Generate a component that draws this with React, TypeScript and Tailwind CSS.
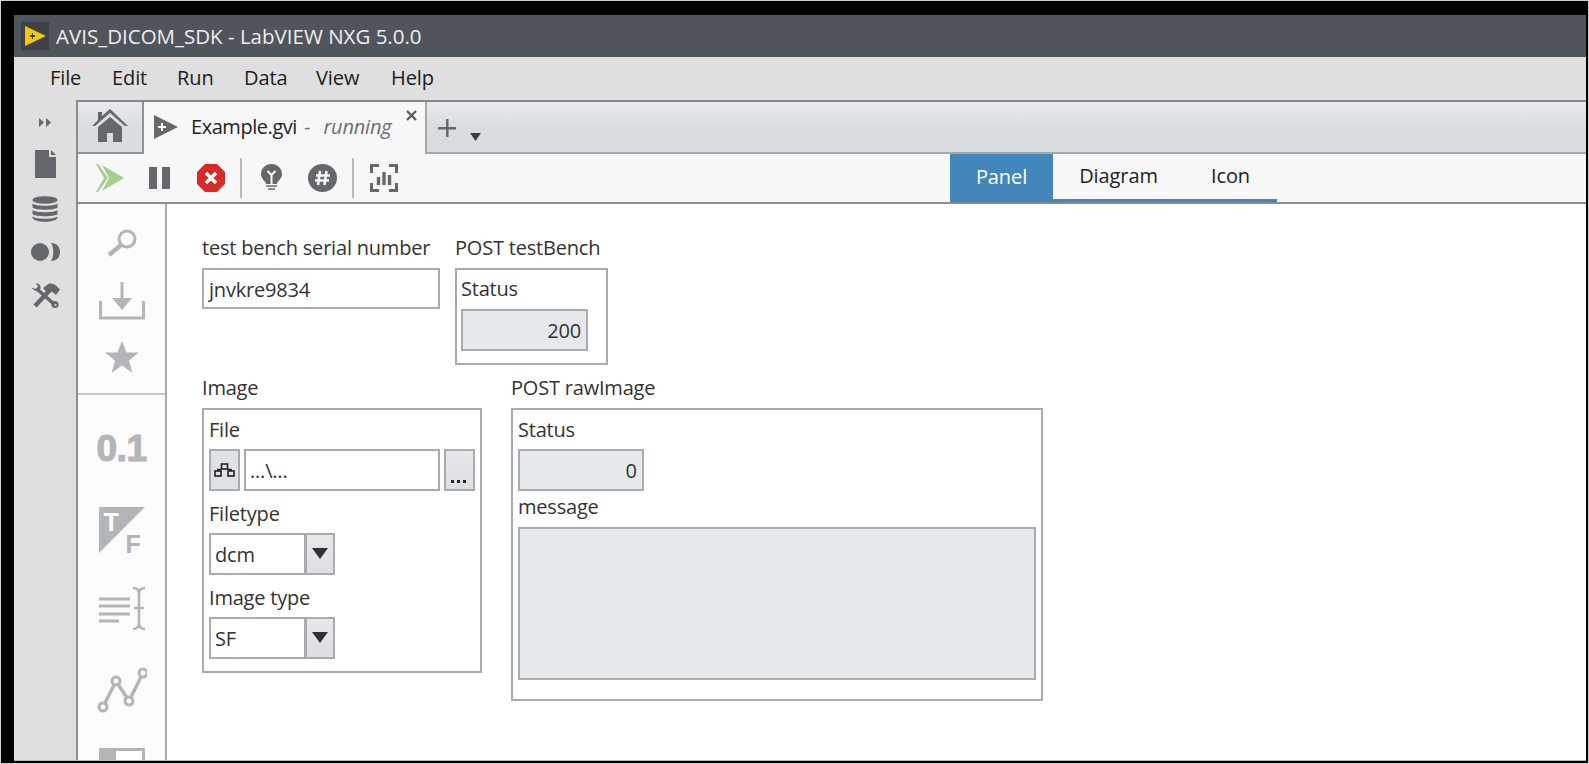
import React from "react";

const F = { fontFamily: '"Open Sans","Noto Sans",sans-serif' };

function Label({ children, className = "" }: { children: React.ReactNode; className?: string }) {
  return <div className={`text-[20px] leading-[26px] text-[#333] tracking-[-0.2px] ${className}`}>{children}</div>;
}

function Combo({ value }: { value: string }) {
  return (
    <div className="flex h-[42px] w-[126px] border-2 border-[#a9abae] bg-white">
      <div className="flex-1 pl-[4px] text-[20px] leading-[40px] tracking-[-0.2px] text-[#333]">{value}</div>
      <div className="flex w-[29px] items-center justify-center border-l-[3px] border-[#a9abae] bg-gradient-to-b from-[#e6e8ea] to-[#dcdfe2]">
        <svg width="16" height="12" viewBox="0 0 16 12"><path d="M0 0H16L8 11Z" fill="#2f3235" /></svg>
      </div>
    </div>
  );
}

function PaletteIcons() {
  const c = "#b3b6b8";
  return (
    <div className="flex h-full w-[89px] shrink-0 flex-col overflow-hidden border-r-2 border-[#a9abae] bg-[#fbfbfb]">
      <div className="flex flex-col items-center border-b-2 border-[#c5c7c9] pb-[20px] pt-[25px]">
        <svg width="32" height="28" viewBox="0 0 32 28" fill="none" stroke={c}>
          <circle cx="21" cy="10" r="8" strokeWidth="3" />
          <path d="M15 16L3 26" strokeWidth="4.5" />
        </svg>
        <svg className="mt-[25px]" width="46" height="38" viewBox="0 0 46 38" fill="none">
          <path d="M23 0V24" stroke={c} strokeWidth="3" />
          <path d="M13 16H33L23 28Z" fill={c} />
          <path d="M1.5 19V36H44.5V19" stroke={c} strokeWidth="3" />
        </svg>
        <svg className="mt-[21px]" width="34" height="32" viewBox="0 0 34 32"><path d="M17 0L21.5 11.5H34L24 19.5L27.5 32L17 24.5L6.5 32L10 19.5L0 11.5H12.5Z" fill={c} /></svg>
      </div>
      <div className="flex flex-col items-center pt-[36px]">
        <div className="h-[36px] text-[37px] leading-[36px] font-bold tracking-[-0.5px] text-[#b3b6b8] [-webkit-text-stroke:1.2px_#b3b6b8]" style={{ fontFamily: '"Liberation Sans",sans-serif' }}>0.1</div>
        <div className="relative mt-[40px] h-[46px] w-[46px]">
          <svg className="absolute inset-0" width="46" height="46" viewBox="0 0 46 46"><path d="M0 0H46L0 46Z" fill={c} /></svg>
          <span className="absolute left-[5px] top-[3px] text-[25px] leading-[25px] font-bold text-white" style={{ fontFamily: '"Liberation Sans",sans-serif' }}>T</span>
          <span className="absolute left-[27px] top-[25px] text-[25px] leading-[25px] font-bold text-[#b3b6b8]" style={{ fontFamily: '"Liberation Sans",sans-serif' }}>F</span>
        </div>
        <svg className="mt-[33px]" width="46" height="45" viewBox="0 0 46 45" fill="none" stroke={c} strokeWidth="3">
          <path d="M0 13H31M0 20H31M0 28H31M0 35H20" />
          <path d="M34 2C39 2 40 5 40 8V37C40 40 39 43 34 43M46 2C41 2 40 5 40 8M40 37C40 40 41 43 46 43M35 22H45" strokeWidth="2.6" />
        </svg>
        <svg className="mt-[36px]" width="50" height="46" viewBox="0 0 50 46" fill="none" stroke={c} strokeWidth="3.5">
          <path d="M6 40L19 14L32 34L46 6" />
          <circle cx="6" cy="40" r="4" fill="#fbfbfb" strokeWidth="3" />
          <circle cx="19" cy="14" r="4" fill="#fbfbfb" strokeWidth="3" />
          <circle cx="32" cy="34" r="4" fill="#fbfbfb" strokeWidth="3" />
          <circle cx="46" cy="6" r="4" fill="#fbfbfb" strokeWidth="3" />
        </svg>
        <div className="mt-[35px] flex h-[30px] w-[46px] shrink-0 border-[3px] border-[#b3b6b8] bg-white">
          <div className="h-[30px] w-[14px] bg-[#b3b6b8]" />
        </div>
      </div>
    </div>
  );
}

export default function App() {
  const ic = "#64686c";
  return (
    <div className="flex h-screen w-screen flex-col overflow-hidden border border-[#cfcfcf] bg-black pb-[2px] pl-[13px] pr-[2px] pt-[14px]" style={F}>
      {/* Title bar */}
      <div className="flex h-[42px] shrink-0 items-center gap-[7px] bg-[#50555c] pl-[7px]">
        <div className="flex h-[28px] w-[28px] items-center justify-center bg-[#3e4247]">
          <svg width="22" height="20" viewBox="0 0 22 20">
            <path d="M1 0L22 10L1 20Z" fill="#f5c800" />
            <path d="M6 9H8V7H9V9H11V11H9V13H8V11H6Z" fill="#3e4247" />
          </svg>
        </div>
        <div className="whitespace-nowrap text-[20.5px] leading-[26px] text-[#eceef0]">AVIS_DICOM_SDK - LabVIEW NXG 5.0.0</div>
      </div>
      {/* Menu */}
      <div className="flex h-[43px] shrink-0 items-center bg-[#dfdfdf] pb-[2px] pl-[36px] text-[20px] tracking-[-0.1px] text-[#1c1c1c]">
        <span className="w-[62px]">File</span>
        <span className="w-[65px]">Edit</span>
        <span className="w-[67px]">Run</span>
        <span className="w-[72px]">Data</span>
        <span className="w-[75px]">View</span>
        <span>Help</span>
      </div>
      <div className="flex min-h-0 flex-1 border-b border-[#b5b5b5]">
        {/* Rail */}
        <div className="flex w-[64px] shrink-0 flex-col items-center border-r-2 border-[#8a8d90] bg-[#dfdfdf] pt-[18px]">
          <svg width="12" height="9" viewBox="0 0 12 9" fill={ic}><path d="M0 0L5 4.5L0 9ZM7 0L12 4.5L7 9Z" /></svg>
          <svg className="mt-[23px]" width="21" height="28" viewBox="0 0 21 28" fill={ic}><path d="M0 0H14V7H21V28H0Z" /><path d="M16 0L21 5H16Z" /></svg>
          <svg className="mt-[18px]" width="26" height="26" viewBox="0 0 26 26" fill={ic}>
            <ellipse cx="13" cy="4" rx="12.5" ry="3.8" />
            <path d="M.5 7.5C3 10.5 23 10.5 25.5 7.5V11.5C23 14.5 3 14.5 .5 11.5ZM.5 14C3 17 23 17 25.5 14V18C23 21 3 21 .5 18ZM.5 20.5C3 23.5 23 23.5 25.5 20.5V22C23 27 3 27 .5 22Z" />
          </svg>
          <svg className="mt-[21px]" width="29" height="18" viewBox="0 0 29 18" fill={ic}>
            <circle cx="9" cy="9" r="9" />
            <path d="M20 0C26 0 29 4 29 9C29 14 26 18 20 18C23 14 23 4 20 0Z" />
          </svg>
          <svg className="mt-[22px]" width="29" height="26" viewBox="0 0 29 26" fill="none">
            <path d="M6 6L24 22" stroke={ic} strokeWidth="3.4" />
            <path d="M0 4.5L3 7C5 9 9 8.5 9.5 5C10 2.5 8 0.5 5 0L7 3.5L4.5 6L0 4.5Z" fill={ic} />
            <circle cx="24" cy="21.5" r="3.6" fill={ic} />
            <circle cx="24.5" cy="22" r="1.1" fill="#dfdfdf" />
            <path d="M4 23L18 8" stroke={ic} strokeWidth="4.4" />
            <path d="M12 5L18 0.5C21 0 24 1 26 3.5L29 6.5L25 12L21 8.5L17 11Z" fill={ic} />
          </svg>
        </div>
        <div className="flex min-w-0 flex-1 flex-col">
          {/* Tab strip */}
          <div className="flex h-[54px] shrink-0 items-stretch border-t-2 border-[#85898d] bg-gradient-to-b from-[#e8eaec] via-[#d9dde0] to-[#d8dcdf]">
            <div className="flex w-[66px] items-center justify-center border-b-2 border-r-2 border-[#8f9296] pb-[2px]">
              <svg width="36" height="34" viewBox="0 0 36 34" fill={ic}>
                <path d="M18 0L36 17H33L18 4L3 17H0L6 11V3H10V7Z" />
                <path d="M6 18L18 8L30 18V33H21V24H15V33H6Z" />
              </svg>
            </div>
            <div className="relative flex w-[283px] items-center border-r-2 border-[#a5a7a9] bg-[#f7f7f7] pb-[2px] pl-[10px]">
              <svg width="24" height="24" viewBox="0 0 24 24">
                <path d="M0 0L24 12L0 24Z" fill={ic} />
                <path d="M4 11H7V8H9V11H12V13H9V16H7V13H4Z" fill="#fff" />
              </svg>
              <span className="ml-[13px] text-[20px] tracking-[-0.45px] text-[#222]">Example.gvi</span>
              <span className="ml-[7px] text-[20px] text-[#6a6e72]">-</span>
              <span className="ml-[13px] text-[20px] italic tracking-[-0.2px] text-[#6a6e72]">running</span>
              <svg className="absolute right-[8px] top-[8px]" width="11" height="11" viewBox="0 0 11 11" stroke="#5a5e62" strokeWidth="2.4"><path d="M1 1L10 10M10 1L1 10" /></svg>
            </div>
            <div className="flex flex-1 border-b-2 border-[#a5a7a9]">
              <svg className="ml-[11px] mt-[17px]" width="18" height="18" viewBox="0 0 18 18" fill={ic}><path d="M8 0H10.5V8H18V10.5H10.5V18H8V10.5H0V8H8Z" /></svg>
              <svg className="ml-[14px] mt-[31px]" width="11" height="8" viewBox="0 0 11 8" fill="#3a3d40"><path d="M0 0H11L5.5 8Z" /></svg>
            </div>
          </div>
          {/* Toolbar */}
          <div className="flex h-[50px] shrink-0 items-center justify-between border-b-2 border-[#8a8d90] bg-[#f7f7f7]">
            <div className="flex items-center">
              <svg className="ml-[18px]" width="28" height="28" viewBox="0 0 28 28" fill="#a5cf8f">
                <path d="M0 0L8 14L0 28L2 28L12 14L2 0Z" />
                <path d="M6 1L28 14L6 27L13 14Z" />
              </svg>
              <svg className="ml-[25px]" width="21" height="22" viewBox="0 0 21 22" fill={ic}><path d="M0 0H8V22H0ZM13 0H21V22H13Z" /></svg>
              <svg className="ml-[27px]" width="28" height="28" viewBox="0 0 28 28">
                <path d="M8 0H20L28 8V20L20 28H8L0 20V8Z" fill="#d92a2a" />
                <path d="M9 9L19 19M19 9L9 19" stroke="#fff" strokeWidth="3.5" />
              </svg>
              <div className="ml-[15px] h-[40px] w-[2px] bg-[#b9bcbf]" />
              <svg className="ml-[19px]" width="21" height="28" viewBox="0 0 21 28">
                <path d="M10.5 0C16.5 0 21 4.5 21 10C21 14 18 16 16 19V20H5V19C3 16 0 14 0 10C0 4.5 4.5 0 10.5 0Z" fill={ic} />
                <path d="M6.5 7L10.5 11L14.5 7M10.5 11V20" stroke="#f7f7f7" strokeWidth="2" fill="none" />
                <path d="M5 22H16M7 25H14" stroke={ic} strokeWidth="1.6" />
              </svg>
              <svg className="ml-[26px]" width="29" height="28" viewBox="0 0 29 28">
                <ellipse cx="14.5" cy="14" rx="14.5" ry="14" fill={ic} />
                <path d="M12 7L10 21M18.5 7L16.5 21M8 11.5H22M7 16.5H21" stroke="#f7f7f7" strokeWidth="2.6" />
              </svg>
              <div className="ml-[15px] h-[40px] w-[2px] bg-[#b9bcbf]" />
              <svg className="ml-[16px]" width="28" height="28" viewBox="0 0 28 28" fill="none" stroke={ic} strokeWidth="3">
                <path d="M1.5 9V1.5H9M19 1.5H26.5V9M26.5 19V26.5H19M9 26.5H1.5V19" />
                <path d="M8.5 13V21M14 8V21M19.5 11V21" strokeWidth="3.4" />
              </svg>
            </div>
            <div className="mr-[309px] flex h-[48px] self-start">
              <div className="flex h-full w-[103px] items-center justify-center bg-[#4386bb] pb-[2px] text-[20px] tracking-[-0.1px] text-white">Panel</div>
              <div className="flex h-full items-start border-b-[3px] border-[#4386bb] text-[20px] tracking-[-0.1px] text-[#222]">
                <span className="flex h-[45px] w-[127px] items-center justify-center pb-[1px] pl-[4px]">Diagram</span>
                <span className="flex h-[45px] w-[97px] items-center justify-center pb-[1px] pl-[4px]">Icon</span>
              </div>
            </div>
          </div>
          {/* Body */}
          <div className="flex min-h-0 flex-1">
            <PaletteIcons />
            <div className="min-w-0 flex-1 bg-white pl-[35px] pt-[31px]">
              <div className="flex items-start gap-[15px]">
                <div>
                  <Label className="h-[33px]">test bench serial number</Label>
                  <div className="h-[41px] w-[238px] border-2 border-[#a9abae] pl-[5px] text-[20px] leading-[39px] tracking-[-0.2px] text-[#333]">jnvkre9834</div>
                </div>
                <div>
                  <Label className="h-[33px]">POST testBench</Label>
                  <div className="h-[97px] w-[153px] border-2 border-[#a9abae] px-[4px] pt-[6px]">
                    <Label className="h-[33px]">Status</Label>
                    <div className="h-[42px] w-[127px] border-2 border-[#a9abae] bg-[#e6e9ec] pr-[5px] text-right text-[20px] leading-[40px] tracking-[-0.2px] text-[#333]">200</div>
                  </div>
                </div>
              </div>
              <div className="mt-[10px] flex items-start gap-[29px]">
                <div>
                  <Label className="h-[33px]">Image</Label>
                  <div className="h-[265px] w-[280px] border-2 border-[#a9abae] px-[5px] pt-[7px]">
                    <Label className="h-[32px]">File</Label>
                    <div className="flex h-[42px] gap-[4px]">
                      <div className="flex w-[31px] items-center justify-center border-2 border-[#a9abae] bg-[#dfe2e5]">
                        <svg width="21" height="14" viewBox="0 0 21 14" fill="none" stroke="#1f2123" strokeWidth="1.6"><rect x="7.5" y="1" width="6" height="5" /><rect x="1" y="8" width="6" height="5" /><rect x="14" y="8" width="6" height="5" /><path d="M4 8V6.5H7.5M13.5 6.5H17V8" /></svg>
                      </div>
                      <div className="w-[196px] border-2 border-[#a9abae] pl-[4px] text-[20px] leading-[40px] tracking-[-0.2px] text-[#333]">...\...</div>
                      <div className="relative w-[31px] border-2 border-[#a9abae] bg-gradient-to-b from-[#e6e8ea] to-[#dcdfe2]">
                        <div className="absolute bottom-[6px] left-[5px] flex gap-[3px]"><i className="h-[3px] w-[3px] bg-[#222]" /><i className="h-[3px] w-[3px] bg-[#222]" /><i className="h-[3px] w-[3px] bg-[#222]" /></div>
                      </div>
                    </div>
                    <Label className="mt-[10px] h-[32px]">Filetype</Label>
                    <Combo value="dcm" />
                    <Label className="mt-[10px] h-[32px]">Image type</Label>
                    <Combo value="SF" />
                  </div>
                </div>
                <div>
                  <Label className="h-[33px]">POST rawImage</Label>
                  <div className="h-[293px] w-[532px] border-2 border-[#a9abae] px-[5px] pt-[7px]">
                    <Label className="h-[32px]">Status</Label>
                    <div className="h-[42px] w-[126px] border-2 border-[#a9abae] bg-[#e6e9ec] pr-[5px] text-right text-[20px] leading-[40px] text-[#333]">0</div>
                    <Label className="h-[36px] pt-[3px]">message</Label>
                    <div className="h-[153px] w-[518px] border-2 border-[#a9abae] bg-[#e6e9ec]" />
                  </div>
                </div>
              </div>
            </div>
          </div>
        </div>
      </div>
    </div>
  );
}
